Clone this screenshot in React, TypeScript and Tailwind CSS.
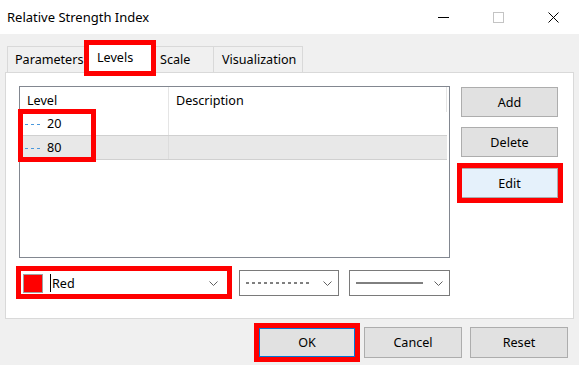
import React from 'react';

const RED = 'border-[5px] border-[#ff0000]';

function Chevron() {
  return (
    <svg width="9" height="5" viewBox="0 0 9 5" className="shrink-0">
      <path d="M0.5 0.5 L4.5 4.5 L8.5 0.5" fill="none" stroke="#606060" strokeWidth="1" />
    </svg>
  );
}

function DashIcon() {
  return (
    <svg width="15" height="3" viewBox="0 0 15 3" className="shrink-0">
      <line x1="0" y1="1.5" x2="15" y2="1.5" stroke="#4a98dc" strokeWidth="1" strokeDasharray="3 3" />
    </svg>
  );
}

function Tab({ label, w }: { label: string; w: string }) {
  return (
    <div className={`${w} h-[26px] flex items-center pt-[2px] border border-b-0 border-[#d9d9d9] -ml-px first:ml-0 bg-[#f0f0f0]`}>
      {label}
    </div>
  );
}

function Btn({ label, className = '' }: { label: string; className?: string }) {
  return (
    <div className={`w-[97px] h-[30px] flex items-center justify-center pt-[2px] border border-[#adadad] bg-[#e1e1e1] ${className}`}>
      {label}
    </div>
  );
}

export default function App() {
  return (
    <div
      className="w-[579px] h-[365px] bg-[#f0f0f0] text-[12.6px] text-black overflow-hidden flex flex-col"
      style={{ fontFamily: '"Noto Sans", "Open Sans", sans-serif' }}
    >
      {/* title bar */}
      <div className="h-[34px] bg-white flex items-center pl-[7px] shrink-0">
        <span className="leading-none text-[13px]">Relative Strength Index</span>
        <div className="ml-auto flex items-center mr-[20px]">
          <svg width="11" height="10" viewBox="0 0 11 10">
            <line x1="0" y1="5.5" x2="11" y2="5.5" stroke="#000" strokeWidth="1" />
          </svg>
          <svg width="11" height="11" viewBox="0 0 11 11" className="ml-[44px]">
            <rect x="0.5" y="0.5" width="10" height="10" fill="none" stroke="#c4c4c4" strokeWidth="1" />
          </svg>
          <svg width="11" height="11" viewBox="0 0 11 11" className="ml-[44px]">
            <path d="M0.5 0.5 L10.5 10.5 M10.5 0.5 L0.5 10.5" stroke="#000" strokeWidth="1" />
          </svg>
        </div>
      </div>

      {/* tabs */}
      <div className="flex items-end pl-[7px] mt-[12px] h-[26px] relative z-10">
        <Tab label="Parameters" w="w-[79px] pl-[7px]" />
        <div className="relative w-[72px] h-[29px] -mx-[2px] -mb-px bg-white border border-b-0 border-[#d9d9d9] flex items-center pl-[12px] pb-[2px]">
          Levels
          <div className={`absolute -left-px -right-px -top-[5px] -bottom-[3px] ${RED}`} />
        </div>
        <Tab label="Scale" w="w-[61px] pl-[6px]" />
        <Tab label="Visualization" w="w-[90px] pl-[8px]" />
      </div>

      {/* panel */}
      <div className="mx-[5px] w-[569px] h-[247px] bg-white border border-[#d9d9d9] flex flex-col pl-[13px] pt-[13px]">
        <div className="flex">
          {/* list view */}
          <div className="relative w-[431px] h-[172px] border border-[#828790] bg-white">
            <div className="flex h-[25px] items-center">
              <div className="w-[149px] pl-[7px] pt-[3px] h-full flex items-center border-r border-[#e5e5e5]">Level</div>
              <div className="flex-1 pl-[7px] pt-[3px] h-full flex items-center">Description</div>
              <div className="w-px h-full bg-[#e5e5e5] mr-[2px]" />
            </div>
            <div className="flex h-[24px] border-b border-[#d0d0d0] mr-[2px]">
              <div className="w-[149px] flex items-center pl-[5px] pt-[2px] gap-[7px] border-r border-[#e5e5e5]">
                <DashIcon />
                <span>20</span>
              </div>
            </div>
            <div className="flex h-[24px] border-b border-[#d0d0d0] bg-[#e8e8e8] mr-[2px]">
              <div className="w-[149px] flex items-center pl-[5px] pt-[2px] gap-[7px] border-r border-[#dcdcdc]">
                <DashIcon />
                <span>80</span>
              </div>
            </div>
            <div className={`absolute left-[-2px] top-[22px] w-[78px] h-[53px] ${RED}`} />
          </div>

          {/* side buttons */}
          <div className="flex flex-col ml-[11px] mt-[1px]">
            <Btn label="Add" />
            <Btn label="Delete" className="mt-[10px]" />
            <div className="relative mt-[11px]">
              <Btn label="Edit" className="bg-[#e5f1fb] border-[#0078d7]" />
              <div className={`absolute -left-[4px] -right-[5px] -top-[5px] -bottom-[5px] ${RED}`} />
            </div>
          </div>
        </div>

        {/* dropdowns */}
        <div className="flex mt-[12px] h-[26px]">
          <div className="relative w-[210px] h-[26px] border border-[#7a7a7a] bg-white flex items-center pl-[3px] pr-[10px]">
            <div className="w-[20px] h-[19px] bg-[#ff0000] border border-[#a0a0a0]" />
            <div className="w-px h-[18px] bg-black ml-[7px]" />
            <span className="ml-px pt-[2px]">Red</span>
            <div className="ml-auto"><Chevron /></div>
            <div className={`absolute -left-[4px] -right-[4px] -top-[5px] -bottom-[4px] ${RED}`} />
          </div>
          <div className="w-[100px] h-[26px] ml-[10px] border border-[#7a7a7a] bg-white flex items-center pl-[6px] pr-[6px]">
            <svg width="64" height="2" viewBox="0 0 64 2">
              <line x1="0" y1="1" x2="64" y2="1" stroke="#000" strokeWidth="1" strokeDasharray="3 3" />
            </svg>
            <div className="ml-auto"><Chevron /></div>
          </div>
          <div className="w-[101px] h-[26px] ml-[10px] border border-[#7a7a7a] bg-white flex items-center pl-[6px] pr-[6px]">
            <svg width="67" height="2" viewBox="0 0 67 2">
              <line x1="0" y1="1" x2="67" y2="1" stroke="#000" strokeWidth="1" />
            </svg>
            <div className="ml-auto"><Chevron /></div>
          </div>
        </div>
      </div>

      {/* footer buttons */}
      <div className="flex justify-end mt-[8px] pr-[11px] gap-[8px] items-start">
        <div className="relative">
          <div className="w-[98px] h-[31px] flex items-center justify-center pt-[2px] border-2 border-[#0078d7] bg-[#e1e1e1]">OK</div>
          <div className={`absolute -inset-[4px] ${RED}`} />
        </div>
        <div className="w-[98px] h-[31px] flex items-center justify-center pt-[2px] border border-[#adadad] bg-[#e1e1e1]">Cancel</div>
        <div className="w-[98px] h-[31px] flex items-center justify-center pt-[2px] border border-[#adadad] bg-[#e1e1e1]">Reset</div>
      </div>
    </div>
  );
}
